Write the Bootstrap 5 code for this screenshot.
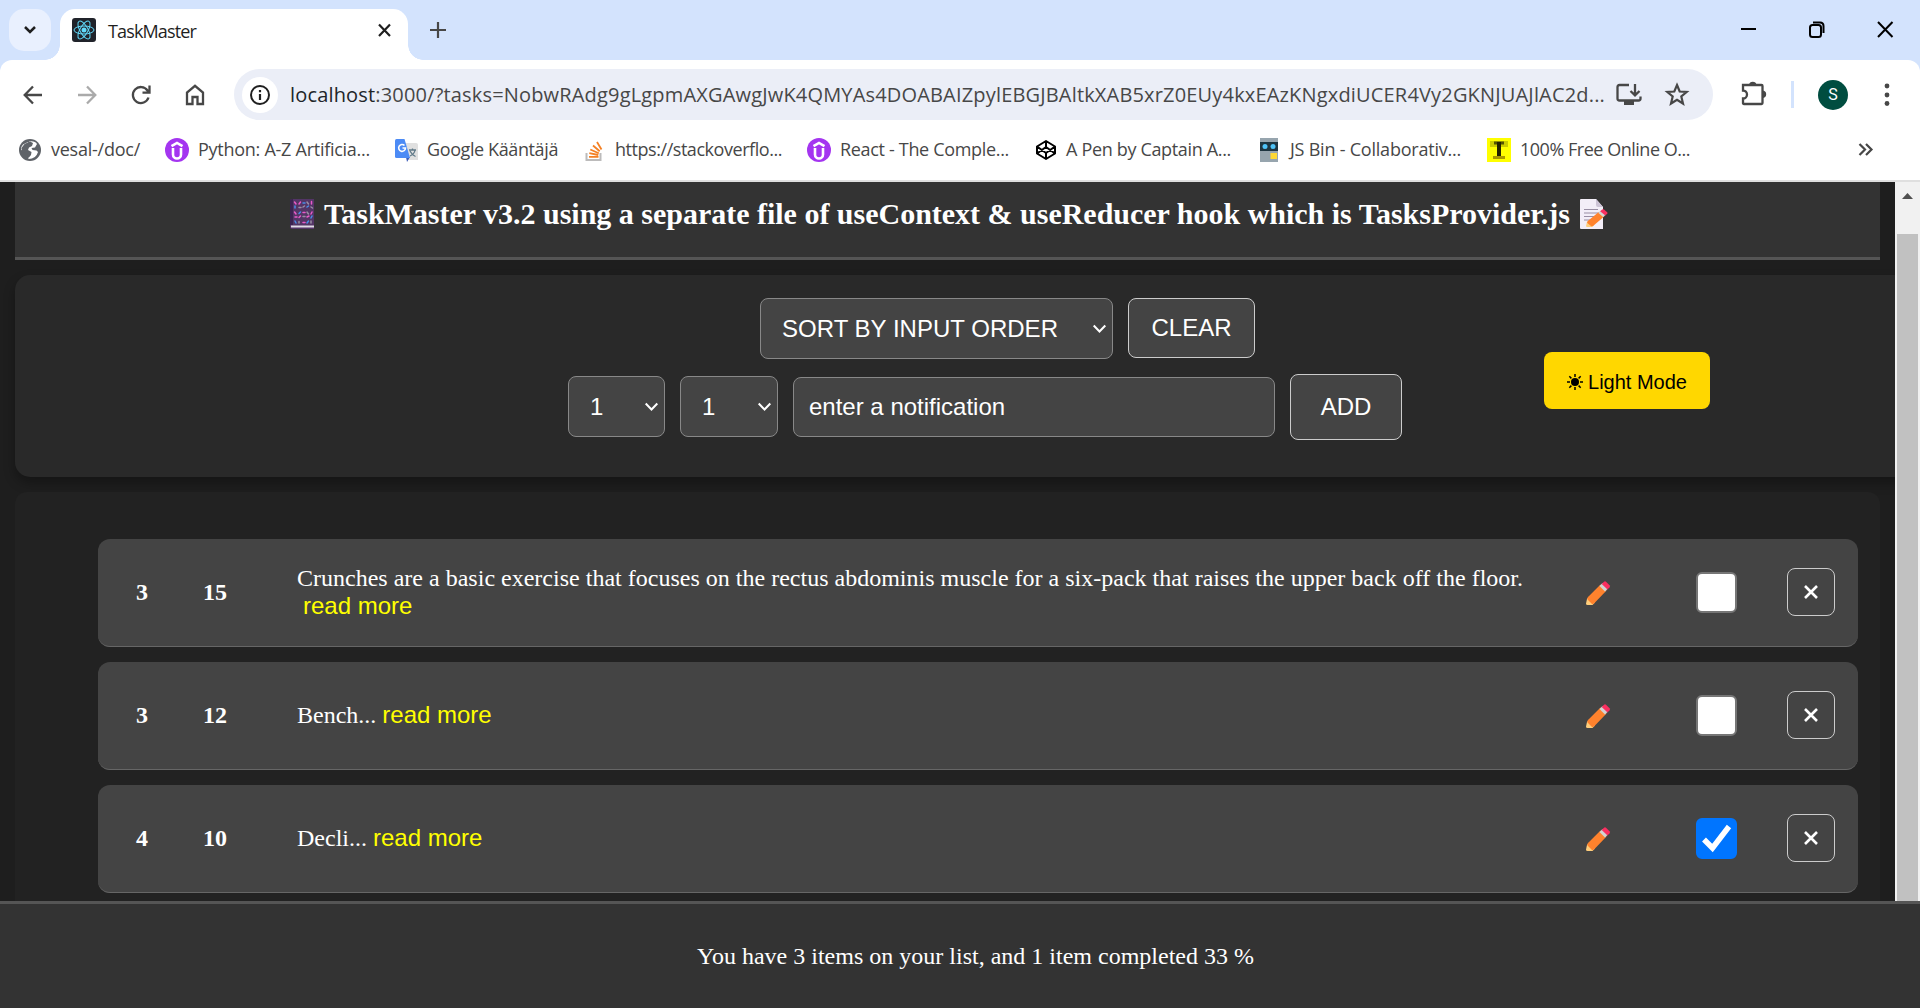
<!DOCTYPE html>
<html lang="en">
<head>
<meta charset="utf-8">
<title>TaskMaster</title>
<link href="https://cdn.jsdelivr.net/npm/bootstrap@5.3.0/dist/css/bootstrap.min.css" rel="stylesheet">
<script src="https://cdn.jsdelivr.net/npm/bootstrap@5.3.0/dist/js/bootstrap.bundle.min.js"></script>
<style>
body{width:1920px;height:1008px;background:#1e1e1e;font-family:"Liberation Serif",serif;font-size:24px;line-height:27px;color:#fff}
svg{display:block;flex:none;overflow:visible}
.chrome-ui{font-family:"Open Sans",sans-serif;font-size:18px;line-height:24px;color:#474747;white-space:nowrap}
.tabstrip{height:60px;background:#d3e3fd}
.tab-search{width:42px;height:42px;margin:9px 9px 0;border-radius:15px;background:#e9f0fe}
.tab-active{width:348px;height:51px;margin-top:9px;padding:0 16px 9px 12px;border-radius:15px 15px 0 0;background:#fff;color:#1f1f1f;position:relative}
.tab-active::before,.tab-active::after{content:"";position:absolute;bottom:0;width:15px;height:15px}
.tab-active::before{left:-15px;background:radial-gradient(circle at 0 0,transparent 14.5px,#fff 15px)}
.tab-active::after{right:-15px;background:radial-gradient(circle at 100% 0,transparent 14.5px,#fff 15px)}
.tab-title{margin-left:12px;padding-top:2px;flex:1}
.win-ctl{padding-right:26px;gap:50px}
.toolbar-wrap{background:#d3e3fd}
.toolbar{height:69px;background:#fff;border-radius:12px 12px 0 0;padding:0 30px 0 21px}
.omnibox{width:1479px;height:51px;border-radius:26px;background:#ebeef7;padding:0 24px 0 8px}
.site-info{width:36px;height:36px;border-radius:50%;background:#fff}
.url-text{font-size:20px;margin-left:12px;width:1319px;flex:none}
.avatar-s{width:30px;height:30px;border-radius:50%;background:#004d40;color:#fff;font:16px/30px Roboto,sans-serif;text-align:center}
.tool-sep{width:3px;height:27px;background:#d3e3fd}
.bm{gap:9px}
.bm-bar{height:53px;background:#fff;border-bottom:2px solid #dfdfdf;padding:0 0 10px 18px}
.bm span{padding-bottom:1px}
.viewport{height:719px;overflow:hidden}
.page-area{width:1895px;overflow:hidden;padding-left:15px}
.app-head{width:1865px;height:78px;background:#333;border-bottom:3px solid #555;padding:0 0 11px 3px}
.app-title{font-size:30px;line-height:34px;margin:0 10px;white-space:nowrap}
.panel-form{width:1910px;height:202px;margin-top:15px;padding-top:23px;border-radius:15px;background:#292929;box-shadow:0 6px 12px rgba(0,0,0,.3);font-family:"Liberation Sans",sans-serif}
.ctl{background:#444;border:1px solid #888;border-radius:8px;color:#fff;line-height:27px}
.ctl-btn{border-color:#ccc;padding-bottom:2px}
.sort-sel{width:353px;height:61px;padding:0 6px 0 21px}
.num-sel{width:97px;height:61px;margin-top:-2px;padding:0 6px 0 21px}
.note-in{width:482px;height:60px;padding:0 15px 2px}
.mode-btn{width:166px;height:57px;padding-top:2px;border-radius:8px;background:#ffd700;color:#000;font-size:20px;line-height:24px;gap:5px}
.panel-list{width:1865px;height:500px;margin-top:15px;padding:47px 22px 0 83px;border-radius:12px;background:#222}
.task{height:108px;margin-bottom:15px;border-radius:12px;background:#444;border-bottom:1px solid #666}
.c1{width:67px;margin-left:38px}.c2{width:94px}
.one-line{padding-bottom:2px}
.more-link{font-family:"Liberation Sans",sans-serif;color:#ff0;margin-left:6px}
.pen{margin:2px 85px 0 0}
.chk{width:41px;height:41px;border-radius:6px;background:#fff;border:2px solid #767676}
.chk-on{background:#0075ff;border-color:#0075ff}
.del-btn{width:48px;height:48px;border:1px solid #ccc;border-radius:8px;margin:-1px 23px 0 50px}
.sbar{width:25px;background:#f1f1f1}
.sbar-thumb{width:21px;margin:35px 0 0 2px;flex:1;background:#c1c1c1}
.app-foot{height:107px;background:#333;border-top:3px solid #555;padding-left:31px}
</style>
</head>
<body class="overflow-hidden">
<svg width="0" height="0" class="position-absolute">
<defs>
<g id="pencil"><path d="M1 18 3 15.500 9 21.500 6.500 24H1.500Q0 24 0 22.500Z" fill="#ffce7c"/><path d="M2 16 14.500 3.500 20.500 9.500 8.500 22Q6.500 24 5.500 22.500L1.500 18.500Q.8 17.300 2 16Z" fill="#ff822d"/><path d="M13.500 5 16.500 2 22 7.500 19 10.500Z" fill="#d3d3d3"/><path d="M15.700 3 18 .7Q19 0 20 .7L23.500 4.200Q24.500 5.200 23.600 6.300L21.500 8.500Z" fill="#f92f60"/></g>
<g id="caret"><path d="M.7 1.500 6.500 7.500 12.300 1.500" fill="none" stroke="#fff" stroke-width="2"/></g>
<g id="cross"><path d="M0 0 12 12M12 0 0 12" stroke="#fff" stroke-width="2.600"/></g>
<g id="udemy"><circle cx="12" cy="12" r="12" fill="#a435f0"/><path d="M8 10V16.500A4 4 0 0 0 16 16.500V10M6.500 8.200 12 5 17.500 8.200" fill="none" stroke="#fff" stroke-width="2.600"/></g>
</defs>
</svg>
<div class="chrome-ui">
  <div class="tabstrip d-flex">
    <div class="tab-search d-flex align-items-center justify-content-center"><svg width="12" height="8"><path d="M1 1 6 6 11 1" fill="none" stroke="#1f1f1f" stroke-width="2.500"/></svg></div>
    <div class="tab-active d-flex align-items-center">
      <svg width="24" height="24" viewBox="0 0 24 24"><rect width="24" height="24" rx="3" fill="#20232a"/><g fill="none" stroke="#61dafb" stroke-width="1"><ellipse cx="12" cy="12" rx="10" ry="4"/><ellipse cx="12" cy="12" rx="10" ry="4" transform="rotate(60 12 12)"/><ellipse cx="12" cy="12" rx="10" ry="4" transform="rotate(120 12 12)"/></g><circle cx="12" cy="12" r="2.500" fill="#61dafb"/></svg>
      <span class="tab-title"><span data-w="88">TaskMaster</span></span>
      <svg width="15" height="15"><path d="M2 1.500 13 13M13 1.500 2 13" stroke="#1f1f1f" stroke-width="2.200"/></svg>
    </div>
    <div class="d-flex align-items-center" style="margin-left:22px"><svg width="16" height="16"><path d="M0 8H16M8 0V16" stroke="#474747" stroke-width="2.200"/></svg></div>
    <div class="win-ctl d-flex align-items-center ms-auto">
      <svg width="18" height="20" viewBox="0 0 18 20"><path d="M1 9H16" stroke="#000" stroke-width="2"/></svg>
      <svg width="18" height="18" viewBox="0 0 18 18"><rect x="2" y="4" width="11" height="12" rx="2.500" fill="none" stroke="#000" stroke-width="2"/><path d="M5 1.500H12Q15.500 1.500 15.500 5V12" fill="none" stroke="#000" stroke-width="2"/></svg>
      <svg width="18" height="18" viewBox="0 0 18 18"><path d="M2 1 16.500 16M16.500 1 2 16" stroke="#000" stroke-width="2"/></svg>
    </div>
  </div>
  <div class="toolbar-wrap"><div class="toolbar d-flex align-items-center">
    <div class="d-flex align-items-center" style="width:213px;gap:30px">
      <svg width="24" height="24" viewBox="0 0 24 24"><path d="M21 12H4M12 3.500 3.700 12 12 20.500" fill="none" stroke="#474747" stroke-width="2.300"/></svg>
      <svg width="24" height="24" viewBox="0 0 24 24"><path d="M3 12H20M12 3.500 20.300 12 12 20.500" fill="none" stroke="#aaa" stroke-width="2.300"/></svg>
      <svg width="24" height="24" viewBox="0 0 24 24"><path d="M19.500 14.500A8 8 0 1 1 18.500 7.500L20 9.500M20.500 2.500V9.700H13.500" fill="none" stroke="#474747" stroke-width="2.300"/></svg>
      <svg width="24" height="24" viewBox="0 0 24 24"><path d="M4 21V9.500L12 2.800 20 9.500V21H14.500V14H9.500V21Z" fill="none" stroke="#474747" stroke-width="2.300"/></svg>
    </div>
    <div class="omnibox d-flex align-items-center">
      <div class="site-info d-flex align-items-center justify-content-center"><svg width="20" height="20"><circle cx="10" cy="10" r="9" fill="none" stroke="#1f1f1f" stroke-width="2"/><path d="M10 9V15M10 5V7.200" stroke="#1f1f1f" stroke-width="2.200"/></svg></div>
      <span class="url-text"><span data-w="1315"><span class="text-dark">localhost</span>:3000/?tasks=NobwRAdg9gLgpmAXGAwgJwK4QMYAs4DOABAIZpylEBGJBAltkXAB5xrZ0EUy4kxEAzKNgxdiUCER4Vy2GKNJUAJlAC2d...</span></span>
      <svg width="26" height="24" viewBox="0 0 26 24" style="margin-left:7px"><path d="M13 2H3.500Q1.500 2 1.500 4V15.500Q1.500 17.500 3.500 17.500H22.500Q24.500 17.500 24.500 15.500V13.500M19 1V11.500M14.500 8 19 12.300 23.500 8" fill="none" stroke="#474747" stroke-width="2.300"/><path d="M8 18H18V22H8Z" fill="#474747"/></svg>
      <svg width="24" height="24" viewBox="0 0 24 24" class="ms-auto"><path d="M12 2 14.700 8.500 21.700 9 16.300 13.500 18 20.500 12 16.700 6 20.500 7.700 13.500 2.300 9 9.300 8.500Z" fill="none" stroke="#474747" stroke-width="2.200"/></svg>
    </div>
    <svg width="26" height="26" viewBox="0 0 26 26" style="margin:-3px 0 0 28px"><path d="M2 5H20.500Q21.500 5 21.500 6V23Q21.500 24 20.500 24H3Q2 24 2 23V18.500A4 4 0 0 0 2 10.500Z" fill="none" stroke="#474747" stroke-width="2.300"/><path d="M8 5A3.800 3.800 0 0 1 15.500 5ZM22 10.500A3.800 3.800 0 0 1 22 18Z" fill="#474747"/></svg>
    <div class="tool-sep ms-4"></div>
    <div class="avatar-s ms-4">S</div>
    <svg width="6" height="26" class="ms-auto" viewBox="0 0 6 26"><g fill="#474747"><circle cx="3" cy="4" r="2.400"/><circle cx="3" cy="13" r="2.400"/><circle cx="3" cy="21.500" r="2.400"/></g></svg>
  </div></div>
  <div class="bm-bar d-flex align-items-center">
    <div class="bm d-flex align-items-center" style="width:147px"><svg width="24" height="24" viewBox="0 0 24 24"><circle cx="12" cy="12" r="11" fill="#5f6368"/><path d="M11 3.500Q17 2.500 19 6L17 9.500 13.500 10 14.500 12 18.500 12.500 20 14Q18 21 10.500 21L10 18 12 15.500 9 13.500 3 12Q2.500 9 5 6.500L10 4 11 6 8.500 9 9.500 11.500Z" fill="#fff"/><path d="M12 3.500 15 5 14 8 11 9.500 10 12 13.500 14 13 17 10.500 20 8.500 15.500 4 14 3.500 10 6.500 6Z" fill="#5f6368"/></svg><span data-w="89">vesal-/doc/</span></div>
    <div class="bm d-flex align-items-center" style="width:229px"><svg width="24" height="24"><use href="#udemy"/></svg><span data-w="172">Python: A-Z Artificia...</span></div>
    <div class="bm d-flex align-items-center" style="width:188px"><svg width="24" height="24" viewBox="0 0 24 24"><path d="M10 5H22Q24 5 24 7V22H13Z" fill="#e0e0e0"/><path d="M12 19H16L13 24Z" fill="#3a5bb8"/><path d="M2.500 1H10.500L16 20H2.500Q1 20 1 18.500V2.500Q1 1 2.500 1Z" fill="#4c8bf5"/><path d="M10.500 7.500A3.400 3.400 0 1 0 11.500 10H8.500" fill="none" stroke="#fff" stroke-width="1.600"/><path d="M15 12H22M18.500 10.500V12M16 18Q20.500 16 21 12M16 13Q18 17 21.500 18.500" fill="none" stroke="#607988" stroke-width="1.300"/></svg><span data-w="131">Google Kääntäjä</span></div>
    <div class="bm d-flex align-items-center" style="width:225px"><svg width="24" height="24" viewBox="0 0 24 24"><path d="M4.500 15V22H18.500V15" fill="none" stroke="#bcbbbb" stroke-width="2"/><path d="M7 18.800H16.500M7.300 15.200 16.300 17M8.300 11.500 16.800 15.300M11 7.500 17.700 13.300M15 4 19.500 11.500" stroke="#f48024" stroke-width="1.800"/></svg><span data-w="167">https://stackoverflo...</span></div>
    <div class="bm d-flex align-items-center" style="width:226px"><svg width="24" height="24"><use href="#udemy"/></svg><span data-w="169">React - The Comple...</span></div>
    <div class="bm d-flex align-items-center" style="width:224px"><svg width="24" height="24" viewBox="-1 0 24 24"><path d="M12 3 21 8.500V15.500L12 21 3 15.500V8.500ZM3 8.500 12 15 21 8.500M3 15.500 12 9 21 15.500M12 3V9M12 15V21" fill="none" stroke="#000" stroke-width="2" stroke-linejoin="round"/></svg><span data-w="165">A Pen by Captain A...</span></div>
    <div class="bm d-flex align-items-center" style="width:230px"><svg width="24" height="24" viewBox="0 0 24 24"><path d="M3 0H21V24H3Z" fill="#97a5ae"/><path d="M3 4H21V13H3Z" fill="#1e3540"/><circle cx="8" cy="8.500" r="2.500" fill="#4fc3f7"/><circle cx="16" cy="8.500" r="2.500" fill="#4fc3f7"/><path d="M13.500 15H20V21H13.500Z" fill="#fdd835"/></svg><span data-w="171">JS Bin - Collaborativ...</span></div>
    <div class="bm d-flex align-items-center"><svg width="24" height="24" viewBox="0 0 24 24"><path d="M0 0H24V24H0Z" fill="#ff0"/><path d="M3 3H21V9H3Z" fill="#cc0"/><path d="M7 5H17" stroke="#550" stroke-width="3"/><path d="M12 4V20" stroke="#220" stroke-width="4"/><path d="M6 19.500H18" stroke="#a90" stroke-width="3"/></svg><span data-w="170">100% Free Online O...</span></div>
    <svg width="15" height="13" class="ms-auto" style="margin-right:47px"><path d="M1.500 1 7 6.500 1.500 12M8 1 13.500 6.500 8 12" fill="none" stroke="#474747" stroke-width="2.200"/></svg>
  </div>
</div>
<main class="viewport d-flex">
  <div class="page-area">
    <header class="app-head d-flex align-items-center justify-content-center">
      <svg width="24" height="30" viewBox="0 0 24 30"><path d="M2 0H24V30H2Q0 30 0 28V2Q0 0 2 0Z" fill="#533566"/><path d="M0 2Q0 0 3 0V26H0Z" fill="#3b2350"/><path d="M1 26.500H24V28.500H1Z" fill="#e0dbe6"/><g fill="none" stroke-width="1.500" stroke-linecap="round"><path d="M4.500 3 6 5M9 5 10.500 3M21.500 2.500V5M4.500 13 6 15M13 13.500H15M21 15 22 13M5 18H7M9 18.500 10.500 17M17 18 19 17M13 23.500H15" stroke="#e85ac8"/><path d="M13 4H15M5 7V9M17 8 18.500 7M9 14.500 10.500 13M21 19 22 17M5 22 6 24M17 24 18.500 22" stroke="#498de8"/><path d="M17 3 18.500 5M9 8.500H11M13 8 14.500 7M21 8 22.500 9M17 13 18.500 15M13 17.500H15M9 22.500V24M21 22V24" stroke="#998ea4"/></g></svg>
      <h1 class="app-title fw-bold"><span data-w="1246">TaskMaster v3.2 using a separate file of useContext &amp; useReducer hook which is TasksProvider.js</span></h1>
      <svg width="28" height="30" viewBox="0 0 28 30"><path d="M1 0H16L23 8V30H1Q0 30 0 29V1Q0 0 1 0Z" fill="#f3eef8"/><path d="M16 0 23 8H18Q16 8 16 6Z" fill="#cdc4d6"/><path d="M4 10.500H18M4 14H19M4 17.500H17M4 21H11" stroke="#998ea4" stroke-width="1.200"/><g transform="translate(6 10) scale(.9 .75)"><use href="#pencil"/></g></svg>
    </header>
    <section class="panel-form d-flex">
      <div style="width:834px;margin-left:553px">
        <div class="d-flex" style="gap:15px;margin-left:192px">
          <div class="ctl sort-sel d-flex align-items-center justify-content-between"><span data-w="276">SORT BY INPUT ORDER</span><svg width="13" height="9"><use href="#caret"/></svg></div>
          <div class="ctl ctl-btn d-flex align-items-center justify-content-center" style="width:127px;height:60px">CLEAR</div>
        </div>
        <div class="d-flex align-items-center" style="gap:15px;margin-top:15px">
          <div class="ctl num-sel d-flex align-items-center justify-content-between"><span>1</span><svg width="13" height="9"><use href="#caret"/></svg></div>
          <div class="ctl num-sel d-flex align-items-center justify-content-between" style="width:98px"><span>1</span><svg width="13" height="9"><use href="#caret"/></svg></div>
          <div class="ctl note-in d-flex align-items-center">enter a notification</div>
          <div class="ctl ctl-btn d-flex align-items-center justify-content-center" style="width:112px;height:66px">ADD</div>
        </div>
      </div>
      <div class="mode-btn d-flex align-items-center justify-content-center" style="margin:54px 0 0 142px">
        <svg width="16" height="16" viewBox="0 0 16 16"><circle cx="8" cy="8" r="4"/><path d="M8 0V3M8 13V16M0 8H3M13 8H16M2.300 2.300 4.400 4.400M11.600 11.600 13.700 13.700M2.300 13.700 4.400 11.600M11.600 4.400 13.700 2.300" stroke="#000" stroke-width="1.500"/></svg><span>Light Mode</span>
      </div>
    </section>
    <section class="panel-list">
      <div class="task d-flex align-items-center">
        <b class="c1">3</b><b class="c2">15</b>
        <div class="flex-grow-1"><span data-w="1226">Crunches are a basic exercise that focuses on the rectus abdominis muscle for a six-pack that raises the upper back off the floor.</span><br><span class="more-link">read more</span></div>
        <svg width="25" height="25" class="pen"><use href="#pencil"/></svg><div class="chk"></div>
        <div class="del-btn d-flex align-items-center justify-content-center"><svg width="12" height="12"><use href="#cross"/></svg></div>
      </div>
      <div class="task d-flex align-items-center">
        <b class="c1">3</b><b class="c2">12</b>
        <div class="flex-grow-1 one-line">Bench...<span class="more-link">read more</span></div>
        <svg width="25" height="25" class="pen"><use href="#pencil"/></svg><div class="chk"></div>
        <div class="del-btn d-flex align-items-center justify-content-center"><svg width="12" height="12"><use href="#cross"/></svg></div>
      </div>
      <div class="task d-flex align-items-center">
        <b class="c1">4</b><b class="c2">10</b>
        <div class="flex-grow-1 one-line">Decli...<span class="more-link">read more</span></div>
        <svg width="25" height="25" class="pen"><use href="#pencil"/></svg><div class="chk chk-on"><svg width="37" height="37" viewBox="0 0 37 37"><path d="M6 19.500 14.500 28 31 6.500" fill="none" stroke="#fff" stroke-width="5.500"/></svg></div>
        <div class="del-btn d-flex align-items-center justify-content-center"><svg width="12" height="12"><use href="#cross"/></svg></div>
      </div>
    </section>
  </div>
  <div class="sbar d-flex flex-column"><svg width="11" height="6" style="margin:11px 0 0 7px"><path d="M0 6 5.500 0 11 6Z" fill="#505050"/></svg><div class="sbar-thumb"></div></div>
</main>
<footer class="app-foot d-flex align-items-center justify-content-center"><span data-w="557">You have 3 items on your list, and 1 item completed 33 %</span></footer>
<script>
// Spread each label over its nominal width through letter spacing.
document.querySelectorAll('[data-w]').forEach(function (el) {
  var w = el.getBoundingClientRect().width, n = el.textContent.length;
  el.style.letterSpacing = ((el.dataset.w - w) / n) + 'px';
});
</script>
</body>
</html>
